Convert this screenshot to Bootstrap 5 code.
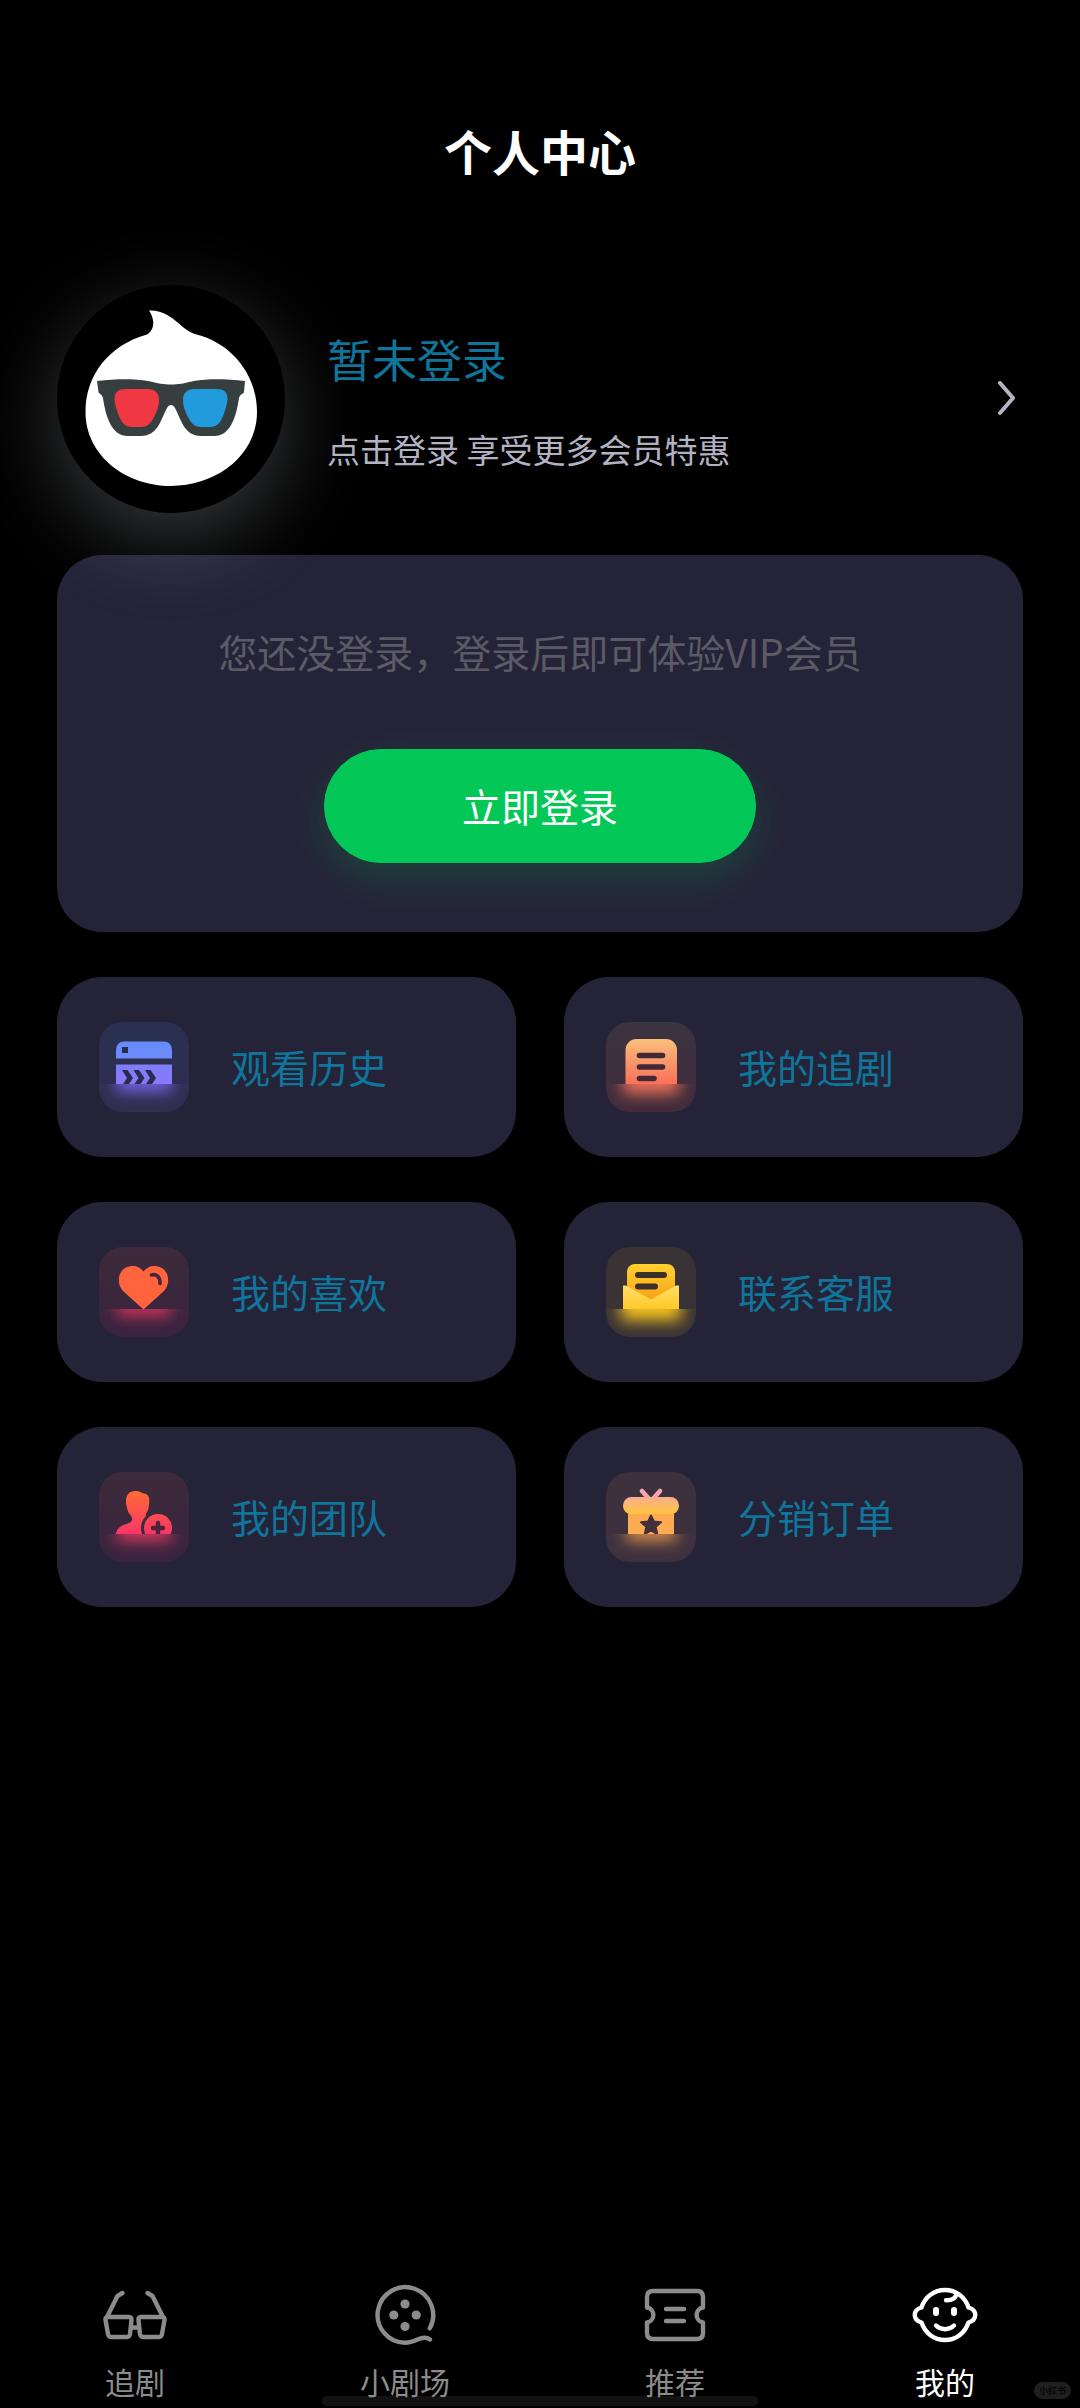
<!DOCTYPE html>
<html lang="zh-CN" data-bs-theme="dark">
<head>
<meta charset="utf-8">
<meta name="viewport" content="width=device-width, initial-scale=1">
<title>个人中心</title>
<link href="https://cdn.jsdelivr.net/npm/bootstrap@5.3.0/dist/css/bootstrap.min.css" rel="stylesheet">
<style>
  body { background: #000; color: #fff; font-family: "Noto Sans CJK SC", "Noto Sans", sans-serif; }
  a { text-decoration: none; }
  .page-title { font-size: 48px; line-height: 72px; padding-top: 114px; padding-bottom: 99px; }
  .page-body { padding: 0 57px; }
  .profile-link { gap: 42px; margin-bottom: 42px; color: #b3b2c3; }
  .avatar { width: 228px; height: 228px; background: #000; box-shadow: 0 24px 84px rgba(225, 230, 240, .25); z-index: 1; }
  .profile-text { gap: 33px; }
  .user-name { font-size: 45px; line-height: 66px; color: #0f759b; }
  .user-note { font-size: 33px; line-height: 48px; }
  .profile-arrow { width: 36px; height: 36px; }
  .panel { background: #252338; border-radius: 45px; }
  .login-panel { padding: 68px 45px 69px; margin-bottom: 45px; }
  .login-tip { font-size: 39px; line-height: 57px; color: #5b5a66; margin-bottom: 69px; }
  .login-btn { width: 432px; height: 114px; padding: 0 0 2px; font-size: 39px; line-height: 57px;
    --bs-btn-color: #fff; --bs-btn-bg: #03c757; --bs-btn-border-color: #03c757; --bs-btn-hover-bg: #02b44e;
    box-shadow: 0 15px 45px rgba(3, 199, 87, .2); }
  .tile-grid { --bs-gutter-x: 48px; --bs-gutter-y: 45px; }
  .tile-link { padding: 45px 42px; gap: 42px; font-size: 39px; line-height: 57px; color: #0f759b; }
  .tile-link span { padding-bottom: 2px; }
  .tile-icon { width: 90px; height: 90px; border-radius: 24px; }
  .tab-bar { padding: 0 0 5px; z-index: 1; }
  .tab-link { color: #8c8c8c; font-size: 30px; line-height: 44px; gap: 8px; }
  .tab-link.active { color: #fff; }
  .tab-link svg { width: 72px; height: 72px; fill: none; stroke: currentColor; stroke-width: 4.4; stroke-linecap: round; stroke-linejoin: round; }
  .home-bar { width: 436px; height: 10px; bottom: 2px; background: #121212; }
  .source-tag { right: 9px; bottom: 9px; padding: 0 5px; background: #1f1f1f; color: #070707; font-size: 9px; line-height: 17px; font-weight: 700; }
</style>
<script src="https://cdn.jsdelivr.net/npm/bootstrap@5.3.0/dist/js/bootstrap.bundle.min.js"></script>
</head>
<body>
<svg class="position-absolute" width="0" height="0" aria-hidden="true">
  <defs>
    <filter id="soft" x="-50%" y="-150%" width="200%" height="400%"><feGaussianBlur stdDeviation="8"/></filter>
    <clipPath id="floor"><rect x="0" y="62" width="90" height="28"/></clipPath>
    <clipPath id="above"><rect x="0" y="0" width="90" height="62"/></clipPath>
    <linearGradient id="bg1" x2="0" y2="1"><stop stop-color="#293050"/><stop offset="1" stop-color="#322c51"/></linearGradient>
    <linearGradient id="bg2" x2="0" y2="1"><stop stop-color="#3b3441"/><stop offset="1" stop-color="#422b3b"/></linearGradient>
    <linearGradient id="bg3" x2="0" y2="1"><stop stop-color="#3d2b3b"/><stop offset="1" stop-color="#39233f"/></linearGradient>
    <linearGradient id="g1" gradientUnits="userSpaceOnUse" x1="0" y1="19" x2="0" y2="62"><stop stop-color="#648df8"/><stop offset=".4" stop-color="#6d8afb"/><stop offset=".5" stop-color="#7c7ffb"/><stop offset="1" stop-color="#8a78fb"/></linearGradient>
    <linearGradient id="g2" x2="0" y2="1"><stop stop-color="#fac07a"/><stop offset="1" stop-color="#f9705a"/></linearGradient>
    <linearGradient id="g4" x2="0" y2="1"><stop stop-color="#ffd22e"/><stop offset="1" stop-color="#f99b17"/></linearGradient>
    <linearGradient id="g4b" x2="0" y2="1"><stop stop-color="#ffe06a"/><stop offset="1" stop-color="#ffc828"/></linearGradient>
    <linearGradient id="g5" gradientUnits="userSpaceOnUse" x1="0" y1="19" x2="0" y2="62"><stop stop-color="#ff6b35"/><stop offset="1" stop-color="#f83566"/></linearGradient>
    <linearGradient id="g6" gradientUnits="userSpaceOnUse" x1="0" y1="18" x2="0" y2="42"><stop stop-color="#f6a3b3"/><stop offset=".4" stop-color="#fbb184"/><stop offset="1" stop-color="#ffc63d"/></linearGradient>
  </defs>
</svg>

<div class="d-flex flex-column min-vh-100">
  <header class="text-center">
    <h1 class="page-title fw-bold m-0">个人中心</h1>
  </header>

  <main class="page-body">
    <a href="#login" class="profile-link d-flex align-items-center">
      <span class="avatar rounded-circle position-relative flex-shrink-0">
        <svg viewBox="0 0 228 228" class="d-block w-100 h-100" aria-hidden="true">
          <path fill="#fff" d="M92 25.500C106 25 114 32 122 38.500C128 44 132 47 138 49C175 58 200 90 200 127C200 170 160 201 114 201C68 201 28.500 170 28.500 127C28.500 90 52 60 90 49.500C98 45 98 34 92 25.500Z"/>
          <path fill="#373e40" d="M40 96C60 93.500 78 93.500 91 96C101 98.500 107 99.500 114 99.500C121 99.500 127 98.500 137 96C150 93.500 168 93.500 188 96L187 107C186.500 109 183 109 182 113C179 133 173 151 157 151H144C127 151 124 134 118 123C116 119 112 119 110 123C104 134 101 151 84 151H71C55 151 49 133 46 113C45 109 42 109 41.500 107Z"/>
          <path fill="#f03844" d="M69 104H91C98 104 102 108 102 115C102 123 98 131 94 137C91 141 88 142 83 142H77C71 142 68 141 65 137C61 130 58 121 57.500 114C57.500 107 61 104 69 104Z"/>
          <path fill="#229bdc" d="M159 104H137C130 104 126 108 126 115C126 123 130 131 134 137C137 141 140 142 145 142H151C157 142 160 141 163 137C167 130 170 121 170.500 114C170.500 107 167 104 159 104Z"/>
        </svg>
      </span>
      <span class="profile-text d-flex flex-column flex-grow-1">
        <span class="user-name">暂未登录</span>
        <span class="user-note">点击登录 享受更多会员特惠</span>
      </span>
      <svg class="profile-arrow flex-shrink-0" viewBox="0 0 36 36" fill="none" stroke="currentColor" stroke-width="4" stroke-linecap="round" stroke-linejoin="round" aria-hidden="true"><path d="M13 2L26 17L13 32"/></svg>
    </a>

    <section class="panel login-panel text-center">
      <p class="login-tip">您还没登录，登录后即可体验VIP会员</p>
      <button type="button" class="btn login-btn rounded-pill">立即登录</button>
    </section>

    <nav class="row row-cols-2 tile-grid" aria-label="个人功能">
      <div class="col"><a href="#history" class="panel tile-link d-flex align-items-center">
        <svg class="tile-icon" viewBox="0 0 90 90" aria-hidden="true">
          <rect width="90" height="90" fill="url(#bg1)"/>
          <path fill="url(#g1)" d="M17 36.500V27.500A8 8 0 0 1 25 19.500H65A8 8 0 0 1 73 27.500V36.500ZM17 42.500H73V62H17Z"/>
          <path fill="#292b4c" d="M23 25h6v6h-6zM23 48h5.500l5.500 8l-4 6h-6l4-6zM34.500 48h5.500l5.500 8l-4 6h-6l4-6zM46 48h5.500l5.500 8l-4 6h-6l4-6z"/>
          <g clip-path="url(#floor)"><rect x="17" y="50" width="56" height="19" fill="#7866ea" filter="url(#soft)"/></g>
        </svg>
        <span>观看历史</span></a></div>
      <div class="col"><a href="#following" class="panel tile-link d-flex align-items-center">
        <svg class="tile-icon" viewBox="0 0 90 90" aria-hidden="true">
          <rect width="90" height="90" fill="url(#bg2)"/>
          <path fill="url(#g2)" d="M19.500 62V28A11 11 0 0 1 30.500 17H60A11 11 0 0 1 71 28V62Z"/>
          <path stroke="#412938" stroke-width="5.600" stroke-linecap="round" d="M33.500 33.500H56.500M33.500 45H56.500M33.500 56.500H48"/>
          <g clip-path="url(#floor)"><rect x="17" y="50" width="56" height="21" fill="#fb7456" filter="url(#soft)"/></g>
        </svg>
        <span>我的追剧</span></a></div>
      <div class="col"><a href="#likes" class="panel tile-link d-flex align-items-center">
        <svg class="tile-icon" viewBox="0 0 90 90" aria-hidden="true">
          <rect width="90" height="90" fill="url(#bg3)"/>
          <g clip-path="url(#floor)"><rect x="18" y="52" width="54" height="16" fill="#e23160" filter="url(#soft)"/></g>
          <path fill="#ff643d" d="M44.500 62.500L24 44C16 35 19.500 19 34 19C38.500 19 42 21 44.500 24.500C47 21 51 19 55 19C69.500 19 73 35 65 44Z"/>
          <path fill="none" stroke="#47283a" stroke-width="3.600" stroke-linecap="round" d="M52.500 28C57 26.500 61.500 29.500 61 36.500"/>
        </svg>
        <span>我的喜欢</span></a></div>
      <div class="col"><a href="#service" class="panel tile-link d-flex align-items-center">
        <svg class="tile-icon" viewBox="0 0 90 90" aria-hidden="true">
          <rect width="90" height="90" fill="#3a3335"/>
          <path fill="url(#g4)" d="M21 58V25A8 8 0 0 1 29 17H61A8 8 0 0 1 69 25V58Z"/>
          <path stroke="#3d3029" stroke-width="6" stroke-linecap="round" d="M32 28H58M32 39.500H49"/>
          <path fill="url(#g4b)" d="M17 38.500H20L45 52.500L70 38.500H73V62H17Z"/>
          <g clip-path="url(#floor)"><rect x="15" y="48" width="60" height="25" fill="#fbc61f" filter="url(#soft)"/></g>
        </svg>
        <span>联系客服</span></a></div>
      <div class="col"><a href="#team" class="panel tile-link d-flex align-items-center">
        <svg class="tile-icon" viewBox="0 0 90 90" aria-hidden="true">
          <rect width="90" height="90" fill="url(#bg3)"/>
          <g clip-path="url(#above)">
            <path fill="url(#g5)" d="M16.500 62C19 54 25 53 30 51C34 49 34 46 31 42.500C28.500 40 28.500 37 27.500 34C25.500 25 29 19 36 19C40 18.500 42 21 45 21.500C50 22 51 27 50 33C49.500 37 49 39 47 41.500V62Z"/>
            <circle cx="59" cy="56" r="17" fill="#3b2a3d"/>
            <circle cx="59" cy="56" r="14" fill="url(#g5)"/>
            <path stroke="#4d2338" stroke-width="4.400" stroke-linecap="round" d="M54 56H64M59 51V61"/>
          </g>
          <g clip-path="url(#floor)"><rect x="18" y="52" width="54" height="16" fill="#ec3765" filter="url(#soft)"/></g>
        </svg>
        <span>我的团队</span></a></div>
      <div class="col"><a href="#orders" class="panel tile-link d-flex align-items-center">
        <svg class="tile-icon" viewBox="0 0 90 90" aria-hidden="true">
          <rect width="90" height="90" fill="#3e313e"/>
          <path fill="none" stroke="#f6a5b0" stroke-width="4.600" stroke-linecap="round" d="M36 19L44 28M54 19L46 28"/>
          <rect x="17" y="25" width="56" height="17.500" rx="8.500" fill="url(#g6)"/>
          <rect x="22" y="42" width="46" height="20" fill="#ffab54"/>
          <g clip-path="url(#above)"><path fill="#42303a" stroke="#42303a" stroke-width="2" stroke-linejoin="round" d="M45 43.500L47.800 49.400L55 50.300L49.700 54.800L51.200 62L45 58.500L38.800 62L40.300 54.800L35 50.300L42.200 49.400Z"/></g>
          <g clip-path="url(#floor)"><rect x="20" y="52" width="50" height="16" fill="#eb9a4e" filter="url(#soft)"/></g>
        </svg>
        <span>分销订单</span></a></div>
    </nav>
  </main>

  <footer class="position-relative mt-auto">
    <nav class="tab-bar nav nav-fill row-cols-4 position-relative" aria-label="主导航">
      <a href="#follow" class="tab-link d-flex flex-column align-items-center">
        <svg viewBox="0 0 72 72" aria-hidden="true"><path d="M23.500 14L18.500 17L8 38M48.500 14L53.500 17L64 38M9 38H30Q32.800 38 32.500 41L31 55Q30.500 58 28 58H12Q9.500 58 9 55L6.500 41Q6 38 9 38ZM63 38H42Q39.200 38 39.500 41L41 55Q41.500 58 44 58H60Q62.500 58 63 55L65.500 41Q66 38 63 38ZM33 48.500H39"/></svg>
        <span>追剧</span></a>
      <a href="#theater" class="tab-link d-flex flex-column align-items-center">
        <svg viewBox="0 0 72 72" aria-hidden="true"><path d="M60.800 49.300A27.800 27.800 0 1 0 36 63.800C41 63.800 45 62.200 48.500 60.600C53 58.500 57.500 58 61 60.500"/><g fill="currentColor" stroke="none"><circle cx="36" cy="25" r="4.600"/><circle cx="36" cy="47.500" r="4.600"/><circle cx="24.800" cy="36" r="4.600"/><circle cx="47.200" cy="36" r="4.600"/></g></svg>
        <span>小剧场</span></a>
      <a href="#recommend" class="tab-link d-flex flex-column align-items-center">
        <svg viewBox="0 0 72 72" aria-hidden="true"><path d="M14 12H58Q64 12 64 18V28.500A7.600 7.600 0 0 0 64 43.500V54Q64 60 58 60H14Q8 60 8 54V43.500A7.600 7.600 0 0 0 8 28.500V18Q8 12 14 12ZM27 30H45M27 42H45"/></svg>
        <span>推荐</span></a>
      <a href="#me" class="tab-link active d-flex flex-column align-items-center" aria-current="page">
        <svg viewBox="0 0 72 72" aria-hidden="true"><path d="M12.500 28.500C16 18 25 11 36 11C47 11 56 18 59.500 28.500C68.500 31 68.500 41 59.500 43.500C56 54 47 61 36 61C25 61 16 54 12.500 43.500C3.500 41 3.500 31 12.500 28.500ZM47.500 14C47.500 19 43 21.500 37 21.200M27 46.500C32 51.500 40 51.500 45 46.500"/><path stroke-width="6" d="M27 31V34M45 31V34"/></svg>
        <span>我的</span></a>
    </nav>
    <div class="home-bar position-absolute start-50 translate-middle-x rounded-pill"></div>
    <span class="source-tag position-absolute rounded-pill">小红书</span>
  </footer>
</div>
</body>
</html>
